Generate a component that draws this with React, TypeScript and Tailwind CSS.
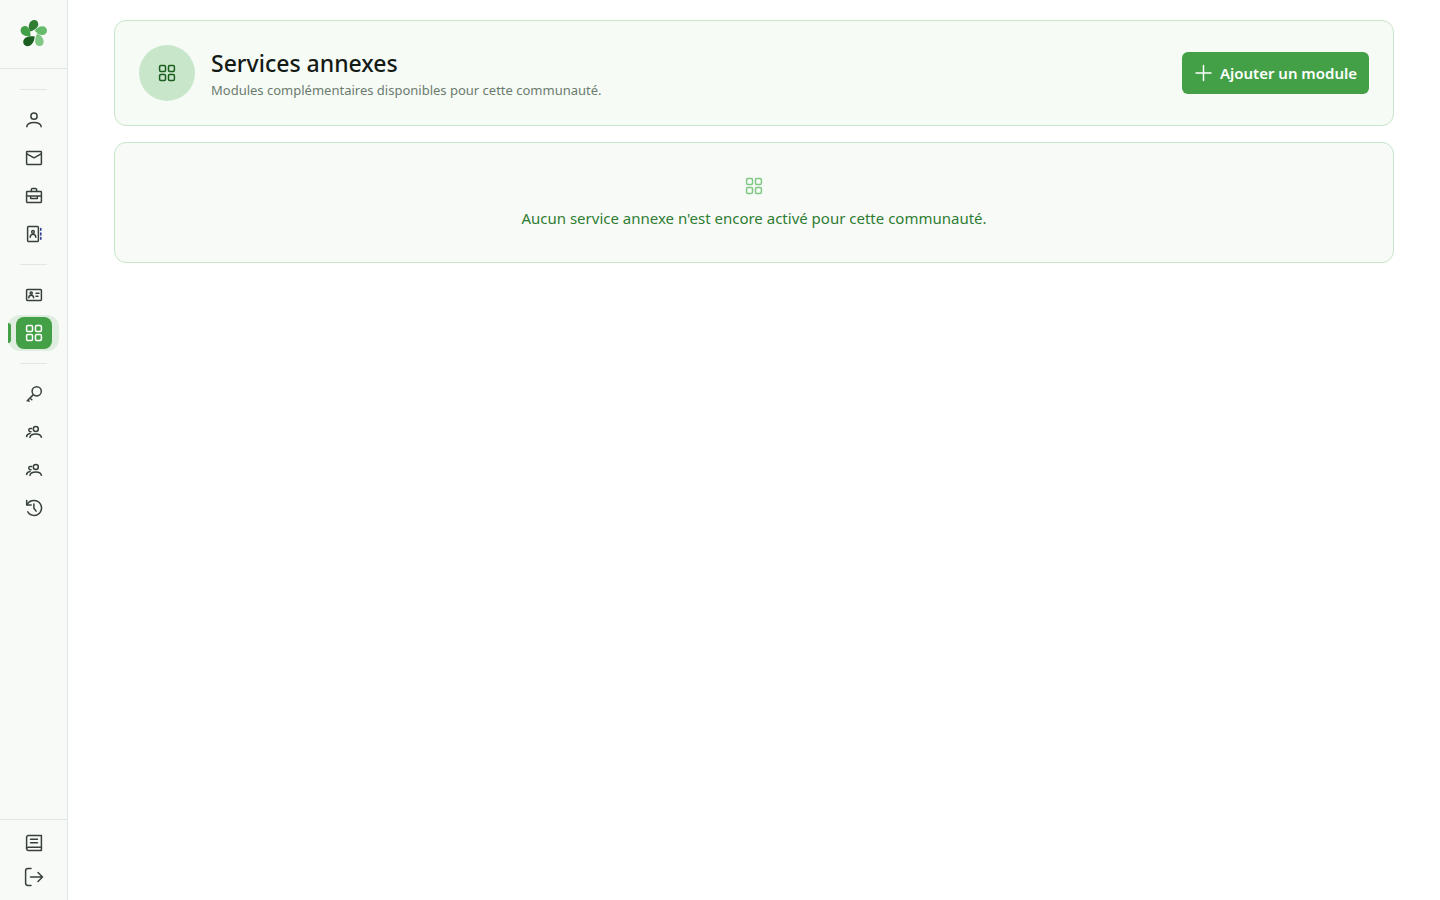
import type { ReactNode } from 'react'
import { clsx } from 'clsx'

type IconName =
  | 'user' | 'mail' | 'briefcase' | 'contacts' | 'idCard' | 'grid'
  | 'key' | 'group' | 'history' | 'book' | 'logout' | 'plus'

const ICONS: Record<IconName, ReactNode> = {
  user: (
    <>
      <circle cx="10" cy="6.2" r="3.1" />
      <path d="M2.8 16.700c.4-3 3-4.200 7.200-4.200s6.800 1.200 7.200 4.200" />
    </>
  ),
  mail: (
    <>
      <rect x="2.600" y="3.600" width="14.800" height="12.800" rx=".6" />
      <path d="M2.800 5.800 10 9.800l7.200-4" />
    </>
  ),
  briefcase: (
    <>
      <rect x="2.600" y="5.600" width="14.800" height="10.800" rx=".6" />
      <path d="M7.300 5.600V4c0-.9.500-1.400 1.400-1.400h2.600c.9 0 1.400.5 1.400 1.400v1.600M2.600 9.900h14.800M6.600 9.900v2.700h6.800V9.900" />
    </>
  ),
  contacts: (
    <>
      <rect x="3.600" y="2.600" width="10.800" height="14.800" rx=".8" />
      <circle cx="9" cy="7.900" r="1.300" />
      <path d="M6.200 13.200c.1-2.100 1.200-3 2.800-3s2.700.9 2.800 3" />
      <path d="M16.800 4.500v1.800M16.800 8.900v2M16.800 13.500v1.800" stroke="#283593" />
    </>
  ),
  idCard: (
    <>
      <rect x="2.600" y="4.600" width="14.800" height="10.800" rx=".8" />
      <circle cx="7.200" cy="8.100" r="1.100" />
      <path d="M4.800 12.800c.1-1.800 1-2.600 2.400-2.600s2.300.8 2.400 2.600M12 8.300h3M12 11.300h2" />
    </>
  ),
  grid: (
    <>
      <rect x="2.600" y="2.600" width="5.900" height="5.900" rx="1.200" />
      <rect x="11.500" y="2.600" width="5.900" height="5.900" rx="1.200" />
      <rect x="2.600" y="11.500" width="5.900" height="5.900" rx="1.200" />
      <rect x="11.500" y="11.500" width="5.900" height="5.900" rx="1.200" />
    </>
  ),
  key: (
    <>
      <circle cx="12.700" cy="7.300" r="4.600" />
      <path d="M9.400 10.600 3.200 16.800M6 14l1.800 1.800M3.900 16.100l1.200 1.200" />
    </>
  ),
  group: (
    <>
      <circle cx="11.800" cy="6.900" r="2.500" />
      <path d="M5.900 15.300c.5-2.500 2.700-3.300 5.900-3.300s5.200.8 5.600 3.300" />
      <path d="M7.500 6.500c-1.600-.4-2.700.400-2.700 1.600s.9 1.800 2.200 1.600M2.600 14.600c.2-1.800 1.400-2.700 3.400-3" />
    </>
  ),
  history: (
    <>
      <path d="M3.100 6.700C4.500 4.200 7 2.600 10 2.600a7.400 7.400 0 1 1-6.200 11.300" />
      <path d="M2.700 2.500v4.500h4.500M9.900 6.100v4.100l2.200 2.900" />
    </>
  ),
  book: (
    <>
      <path d="M4.400 17.400c-1.100 0-1.800-.7-1.800-1.800V4.400c0-1.100.700-1.800 1.800-1.800h13v14.800h-13Z" />
      <path d="M17.400 14.300h-13c-1 0-1.800.500-1.800 1.300M6.500 6.200h7M6.500 9.800h7" />
    </>
  ),
  logout: (
    <>
      <path d="M7 1.600H4c-1.600 0-2.400.8-2.400 2.400v12c0 1.600.8 2.400 2.400 2.400h3" />
      <path d="M6.500 10h12M14 5.500l4.500 4.500-4.500 4.500" />
    </>
  ),
  plus: <path d="M9.500 2.500v15M2 10h15" />,
}

function Icon({ name, className }: { name: IconName; className?: string }) {
  return (
    <svg
      viewBox="0 0 20 20"
      fill="none"
      stroke="currentColor"
      strokeWidth="1.5"
      strokeLinecap="round"
      strokeLinejoin="round"
      aria-hidden="true"
      className={clsx('size-5 shrink-0', className)}
    >
      {ICONS[name]}
    </svg>
  )
}

function Logo() {
  return (
    <svg viewBox="0 0 28 28" className="size-7" aria-hidden="true">
      <path fill="#2e7d32" d="M10.500 11.500C8.700 9 8.300 6.200 9.300 3.700 10.300 1.200 12.100 0 14.100 0c2.600 0 4.400 1.900 4.200 4.400-.3 3.200-3.900 5.700-7.800 7.100Z" />
      <path fill="#66bb6a" d="M14.600 10.600c2.500-3.200 5.600-4.700 8.500-4.400 2.300.3 3.900 2.100 3.900 4.400 0 2.600-1.900 4.500-4.600 4.500-3 0-5.700-1.800-7.800-4.500Z" />
      <path fill="#81c784" d="M17 13.200c3.600 1.500 6.500 4.600 6.600 8.200.1 2.800-1.600 4.700-4 4.700-2.700 0-4.600-1.900-4.500-4.800.1-2.800 1-5.500 1.900-8.100Z" />
      <path fill="#1b5e20" d="M14.700 16.500c-.3 4.200-2 8-5.200 9.200-2.400 1-4.900.200-5.900-1.900-1-2.300 0-5 2.300-6.200 2.500-1.300 5.700-1.400 8.800-1.100Z" />
      <path fill="#43a047" d="M10.500 16.400c-3.700.1-7.400-.8-9.100-3.200C.100 11.200.300 8.500 2.100 7c2-1.600 4.800-1.200 6.300.7 1.800 2.200 2.200 5.600 2.100 8.700Z" />
    </svg>
  )
}

type NavItem = { icon: IconName; label: string; active?: boolean }

const NAV_GROUPS: NavItem[][] = [
  [
    { icon: 'user', label: 'Profil' },
    { icon: 'mail', label: 'Messages' },
    { icon: 'briefcase', label: 'Services' },
    { icon: 'contacts', label: 'Contacts' },
  ],
  [
    { icon: 'idCard', label: 'Communauté' },
    { icon: 'grid', label: 'Services annexes', active: true },
  ],
  [
    { icon: 'key', label: 'Accès' },
    { icon: 'group', label: 'Membres' },
    { icon: 'group', label: 'Groupes' },
    { icon: 'history', label: 'Historique' },
  ],
]

function NavLink({ icon, label, active }: NavItem) {
  return (
    <a
      href="#"
      aria-label={label}
      aria-current={active ? 'page' : undefined}
      className={clsx(
        'relative flex h-9 items-center justify-center rounded-xl',
        active ? 'bg-[#dfeee0] text-white' : 'text-[#37413a] hover:bg-[#edf5ed]'
      )}
    >
      {active && <span className="absolute left-0 h-5 w-[3px] rounded-r bg-[#43a047]" />}
      <span className={clsx('flex h-8 w-9 items-center justify-center rounded-lg', active && 'bg-[#43a047]')}>
        <Icon name={icon} />
      </span>
    </a>
  )
}

function Sidebar() {
  return (
    <aside className="flex w-[68px] shrink-0 flex-col border-r border-[#e0e6e1] bg-[#f8faf8]">
      <a href="#" aria-label="Accueil" className="flex h-[69px] items-center justify-center border-b border-[#e0e6e1]">
        <Logo />
      </a>
      <nav className="flex-1 px-2 pt-2">
        {NAV_GROUPS.map((group, i) => (
          <div key={i}>
            <hr className="mx-3 my-3 border-[#e0e6e1]" />
            <div className="flex flex-col gap-0.5">
              {group.map(item => (
                <NavLink key={item.label} {...item} />
              ))}
            </div>
          </div>
        ))}
      </nav>
      <div className="border-t border-[#e0e6e1] px-2 py-1.5 text-[#37413a]">
        <a href="#" aria-label="Documentation" className="flex h-[34px] items-center justify-center">
          <Icon name="book" />
        </a>
        <button type="button" aria-label="Déconnexion" className="flex h-[34px] w-full items-center justify-center">
          <Icon name="logout" />
        </button>
      </div>
    </aside>
  )
}

export default function App() {
  return (
    <div className="flex min-h-screen bg-white font-['Segoe_UI','Noto_Sans',sans-serif]">
      <Sidebar />
      <main className="min-w-0 flex-1 py-5">
        <div className="mx-auto flex max-w-7xl flex-col gap-4">
          <header className="flex items-center gap-4 rounded-xl border border-[#c8e6c9] bg-[#f6fbf6] p-6">
            <div className="flex size-14 shrink-0 items-center justify-center rounded-full bg-[#c8e6c9] text-[#1b5e20]">
              <Icon name="grid" />
            </div>
            <div className="min-w-0 flex-1">
              <h1 className="text-[23px] leading-[34px] font-medium text-[#141a15]">Services annexes</h1>
              <p className="text-[13px] leading-5 text-[#6b7c6e]">
                Modules complémentaires disponibles pour cette communauté.
              </p>
            </div>
            <button
              type="button"
              className="flex h-[42px] shrink-0 items-center gap-1.5 rounded-md bg-[#43a047] px-3 text-[15px] font-semibold text-white hover:bg-[#388e3c]"
            >
              <Icon name="plus" />
              Ajouter un module
            </button>
          </header>

          <section className="flex flex-col items-center gap-2 rounded-xl border border-[#c8e6c9] bg-[#f8faf8] p-8">
            <Icon name="grid" className="mt-px mb-0.5 text-[#81c784]" />
            <p className="text-[15px] leading-6 text-[#2e7d32]">
              Aucun service annexe n'est encore activé pour cette communauté.
            </p>
          </section>
        </div>
      </main>
    </div>
  )
}
